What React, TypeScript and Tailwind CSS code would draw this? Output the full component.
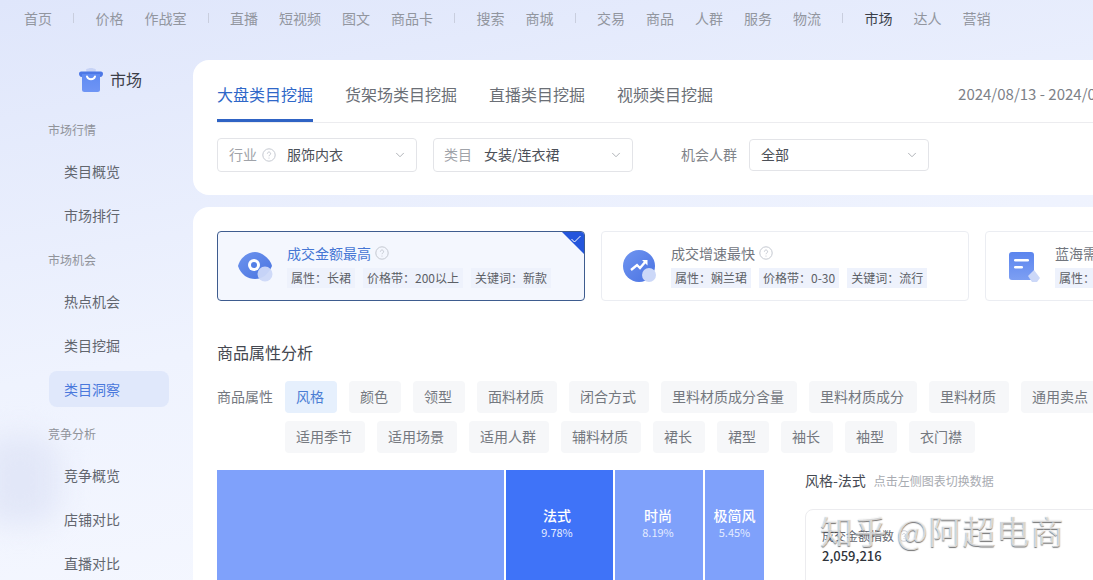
import { ChevronDown } from "lucide-react";

const navGroups = [
  ["首页"],
  ["价格", "作战室"],
  ["直播", "短视频", "图文", "商品卡"],
  ["搜索", "商城"],
  ["交易", "商品", "人群", "服务", "物流"],
  ["市场", "达人", "营销"],
];

function TopNav() {
  return (
    <div className="flex h-[60px] shrink-0 pl-6 pt-[3px] pb-[26px] items-start text-[14px] leading-[30px] text-[#92969f]">
      {navGroups.map((g, i) => (
        <div key={i} className="flex items-center">
          {i > 0 && <div className="mx-[21.25px] h-[10px] w-px bg-[#c9cede]" />}
          <div className="flex gap-[21px]">
            {g.map((t) => (
              <span key={t} className={`whitespace-nowrap ${t === "市场" ? "text-[#3a3f49]" : ""}`}>
                {t}
              </span>
            ))}
          </div>
        </div>
      ))}
    </div>
  );
}

function Help({ size = 14 }: { size?: number }) {
  return (
    <svg width={size} height={size} viewBox="0 0 14 14" fill="none" className="shrink-0">
      <circle cx="7" cy="7" r="6.2" stroke="#c4c8d0" strokeWidth="1" />
      <path d="M5.4 5.6a1.6 1.6 0 1 1 2.4 1.4c-.5.3-.8.6-.8 1.2" stroke="#c4c8d0" strokeWidth="1" />
      <circle cx="7" cy="10" r=".6" fill="#c4c8d0" />
    </svg>
  );
}

function ShopLogo() {
  return (
    <svg width="26" height="24" viewBox="0 0 26 24">
      <defs>
        <linearGradient id="shop" x1="0" y1="0" x2="0" y2="1">
          <stop offset="0" stopColor="#5f8af2" />
          <stop offset="1" stopColor="#6f95f5" />
        </linearGradient>
      </defs>
      <path d="M8 1.5c3-2 7-2 10 0l-1 5H9z" fill="#c7d3f6" />
      <path d="M1 5.5C1 4 2.5 3.5 4 3.5h18c1.500 0 3 .5 3 2s-.5 3.500-3 3.500H4C1.500 9 1 7 1 5.500z" fill="#4d78e6" />
      <path d="M4 6h18v15.500a2.500 2.500 0 0 1-2.500 2.500h-13A2.500 2.500 0 0 1 4 21.500z" fill="url(#shop)" />
      <path d="M9 8.500c1 3.500 7 3.500 8 0" stroke="#fff" strokeWidth="2" fill="none" strokeLinecap="round" />
    </svg>
  );
}

function SideItem({ label, active }: { label: string; active?: boolean }) {
  return (
    <div
      className={`h-9 w-[120px] rounded-lg flex items-center pl-[15px] text-[14px] ${
        active ? "bg-[#e0e8fb] text-[#4a78dc]" : "text-[#62666e]"
      }`}
    >
      {label}
    </div>
  );
}

function SideGroup({ title, items, active }: { title: string; items: string[]; active?: string }) {
  return (
    <div className="flex flex-col">
      <div className="h-5 leading-5 -ml-px text-[12px] text-[#90939a] mb-[13px]">{title}</div>
      <div className="flex flex-col gap-2">
        {items.map((t) => (
          <SideItem key={t} label={t} active={t === active} />
        ))}
      </div>
    </div>
  );
}

function Sidebar() {
  return (
    <div className="relative w-[193px] shrink-0 pl-[49px]">
      <div className="absolute -left-[20px] top-[375px] h-[90px] w-[80px] rounded-[30px] bg-[#e2e7f8] blur-[14px]" />
      <div className="relative flex h-10 items-center gap-[6px] pl-[29px] text-[16px] text-[#3c4049]">
        <ShopLogo />
        <span className="-mt-[3px]">市场</span>
      </div>
      <div className="relative mt-5 flex flex-col gap-[17px]">
        <SideGroup title="市场行情" items={["类目概览", "市场排行"]} />
        <SideGroup title="市场机会" items={["热点机会", "类目挖掘", "类目洞察"]} active="类目洞察" />
        <SideGroup title="竞争分析" items={["竞争概览", "店铺对比", "直播对比"]} />
      </div>
    </div>
  );
}

function Select({ label, value, help, w = "w-[200px]", h = "h-[34px]" }: { label?: string; value: string; help?: boolean; w?: string; h?: string }) {
  return (
    <div className={`${w} ${h} shrink-0 rounded border border-[#e3e4e8] bg-white flex items-center pl-[11px] pr-[9px] text-[14px]`}>
      {label && <span className={`text-[#a0a3a9] mr-[5px] -mt-[2px] ${help ? "" : "-ml-px"}`}>{label}</span>}
      {help && <Help />}
      <span className={`text-[#4c5058] -mt-[2px] ${label ? (help ? "ml-[11px]" : "ml-[7px]") : ""}`}>{value}</span>
      <ChevronDown size={14} className="ml-auto text-[#a5a8ae]" strokeWidth={1.5} />
    </div>
  );
}

function Header() {
  const tabs = ["大盘类目挖掘", "货架场类目挖掘", "直播类目挖掘", "视频类目挖掘"];
  return (
    <div className="h-[135px] rounded-l-2xl bg-white pl-6 overflow-hidden">
      <div className="flex items-start h-[63px] border-b border-[#ececef] pt-5">
        <div className="flex gap-8 shrink-0">
          {tabs.map((t, i) => (
            <div
              key={t}
              className={`h-[42px] leading-[28px] text-[16px] whitespace-nowrap border-b-[3px] ${
                i === 0 ? "border-[#2f63c4] text-[#2f67c8]" : "border-transparent text-[#6b6f76]"
              }`}
            >
              {t}
            </div>
          ))}
        </div>
        <div className="ml-[245px] shrink-0 leading-[28px] whitespace-nowrap text-[15px] text-[#7d8188]">
          2024/08/13 - 2024/08/19
        </div>
      </div>
      <div className="flex items-center gap-4 mt-[15px]">
        <Select label="行业" value="服饰内衣" help />
        <Select label="类目" value="女装/连衣裙" />
        <div className="flex items-center gap-3 ml-8">
          <span className="text-[14px] -mt-[2px] text-[#7f8389]">机会人群</span>
          <Select value="全部" w="w-[180px]" h="h-8" />
        </div>
      </div>
    </div>
  );
}

function EyeIcon() {
  return (
    <svg width="36" height="32" viewBox="0 0 36 32">
      <defs>
        <linearGradient id="eye" x1="0" y1="0" x2="1" y2="1">
          <stop offset="0" stopColor="#6d94ee" />
          <stop offset="1" stopColor="#4a74e0" />
        </linearGradient>
      </defs>
      <path d="M0 16C3 6 11 2 17 2s15 6 17 14c-4 9-10 13-17 13S3 25 0 16z" fill="url(#eye)" />
      <circle cx="16" cy="15" r="6" fill="#fff" />
      <circle cx="16" cy="15" r="3" fill="#5480e6" />
      <circle cx="27" cy="24" r="7.500" fill="#ccd8f8" opacity=".95" />
    </svg>
  );
}

function TrendIcon() {
  return (
    <svg width="36" height="34" viewBox="0 0 36 34">
      <defs>
        <linearGradient id="trend" x1="0" y1="0" x2="1" y2="1">
          <stop offset="0" stopColor="#6f95f0" />
          <stop offset="1" stopColor="#4a72e2" />
        </linearGradient>
      </defs>
      <circle cx="17" cy="16" r="16" fill="url(#trend)" />
      <path d="M9 20l6-5 3 3 6-7" stroke="#fff" strokeWidth="2.400" fill="none" />
      <path d="M20 10h5.500v5.500z" fill="#fff" />
      <circle cx="27" cy="25" r="7" fill="#ccd8f8" />
    </svg>
  );
}

function DocIcon() {
  return (
    <svg width="36" height="34" viewBox="0 0 36 34">
      <defs>
        <linearGradient id="doc" x1="0" y1="0" x2="0" y2="1">
          <stop offset="0" stopColor="#5b85ee" />
          <stop offset="1" stopColor="#7d9ff3" />
        </linearGradient>
      </defs>
      <rect x="3" y="2" width="25" height="28" rx="3" fill="url(#doc)" />
      <rect x="8" y="9" width="15" height="2.600" rx="1.300" fill="#fff" />
      <rect x="8" y="16" width="9" height="2.600" rx="1.300" fill="#fff" />
      <path d="M22 26l6-6 6 8-3 4h-5z" fill="#ccd8f8" />
    </svg>
  );
}

function Card({ title, tags, icon, active }: { title: string; tags: string[]; icon: React.ReactNode; active?: boolean }) {
  return (
    <div
      className={`relative h-[70px] w-[368px] shrink-0 rounded border pl-5 pt-[11px] flex overflow-hidden ${
        active ? "border-[#3e5c8f] bg-[#f4f7fe]" : "border-[#ebedf2] bg-white"
      }`}
    >
      <div className="w-[49px] shrink-0 pt-[7px]">{icon}</div>
      <div className="flex flex-col">
        <div className="flex h-5 items-center gap-1 whitespace-nowrap">
          <span className={`text-[14px] ${active ? "text-[#4676d4]" : "text-[#72767e]"}`}>{title}</span>
          <Help />
        </div>
        <div className="mt-[5px] flex gap-2">
          {tags.map((t) => (
            <span key={t} className="h-5 leading-5 px-1 whitespace-nowrap text-[12px] text-[#5c6066] bg-[#eef2fc]">
              {t}
            </span>
          ))}
        </div>
      </div>
      {active && (
        <div className="absolute right-0 top-0">
          <svg width="22" height="22" viewBox="0 0 22 22">
            <path d="M0 0h22v22z" fill="#2456dc" />
            <path d="M9.500 7l3 3 6-6" stroke="#fff" strokeWidth="1" fill="none" />
          </svg>
        </div>
      )}
    </div>
  );
}

function Chip({ label, active }: { label: string; active?: boolean }) {
  return (
    <span
      className={`h-8 leading-[30px] shrink-0 rounded pl-[11px] pr-[13px] text-[14px] whitespace-nowrap ${
        active ? "bg-[#e6f0fd] text-[#4a7dd4]" : "bg-[#f6f7f9] text-[#74787f]"
      }`}
    >
      {label}
    </span>
  );
}

function Block({ w, dark, name, pct, shift }: { w: string; dark?: boolean; name?: string; pct?: string; shift?: string }) {
  return (
    <div className={`${w} ${shift ?? ""} shrink-0 h-[130px] pt-[35px] flex flex-col items-center text-white ${dark ? "bg-[#3f73f8]" : "bg-[#7fa1fb]"}`}>
      {name && <div className="text-[14px] font-medium leading-[20px] whitespace-nowrap">{name}</div>}
      {pct && <div className="text-[11px] leading-[15px] text-[#e3ebff]">{pct}</div>}
    </div>
  );
}

function Content() {
  const row1 = ["风格", "颜色", "领型", "面料材质", "闭合方式", "里料材质成分含量", "里料材质成分", "里料材质", "通用卖点"];
  const row2 = ["适用季节", "适用场景", "适用人群", "辅料材质", "裙长", "裙型", "袖长", "袖型", "衣门襟"];
  return (
    <div className="flex-1 rounded-tl-2xl bg-white pl-6 pt-6 overflow-hidden">
      <div className="flex gap-4">
        <Card active icon={<EyeIcon />} title="成交金额最高" tags={["属性：长裙", "价格带：200以上", "关键词：新款"]} />
        <Card icon={<TrendIcon />} title="成交增速最快" tags={["属性：娴兰珺", "价格带：0-30", "关键词：流行"]} />
        <Card icon={<DocIcon />} title="蓝海需求类目" tags={["属性：通勤", "价格带：30-50"]} />
      </div>
      <div className="mt-10 h-6 leading-[22px] text-[16px] text-[#444851]">商品属性分析</div>
      <div className="mt-4 flex gap-3">
        <div className="h-8 leading-[30px] w-14 shrink-0 text-[14px] whitespace-nowrap text-[#74787f]">商品属性</div>
        <div className="flex flex-col gap-2">
          <div className="flex gap-3">
            {row1.map((c, i) => (
              <Chip key={c} label={c} active={i === 0} />
            ))}
          </div>
          <div className="flex gap-3">
            {row2.map((c) => (
              <Chip key={c} label={c} />
            ))}
          </div>
        </div>
      </div>
      <div className="mt-[17px] flex">
        <div className="flex gap-[2px] w-[547px] shrink-0">
          <Block w="w-[287px]" />
          <Block w="w-[107px]" dark name="法式" pct="9.78%" shift="pr-[5px]" />
          <Block w="w-[88px]" name="时尚" pct="8.19%" shift="pr-[2px]" />
          <Block w="w-[59px]" name="极简风" pct="5.45%" />
        </div>
        <div className="ml-[41px] w-[400px] shrink-0">
          <div className="flex items-center gap-2 h-[22px] whitespace-nowrap">
            <span className="text-[14px] -mt-[2px] text-[#444851]">风格-法式</span>
            <span className="text-[12px] -mt-[1px] text-[#a8abb1]">点击左侧图表切换数据</span>
          </div>
          <div className="mt-[17px] h-[100px] rounded-lg border border-[#ececef] pl-4 pt-[16px]">
            <div className="flex items-center gap-1 h-5 text-[12px] text-[#62666e]">
              成交金额指数 <Help size={12} />
            </div>
            <div className="text-[13px] leading-5 font-medium text-[#30343b]">2,059,216</div>
          </div>
        </div>
      </div>
    </div>
  );
}

export default function App() {
  return (
    <div className="relative flex h-[580px] w-[1093px] flex-col overflow-hidden bg-[linear-gradient(170deg,#dfe6fb,#eff3fe_50%,#f7f9ff)] font-['Noto_Sans_CJK_SC','Microsoft_YaHei',sans-serif]">
      <TopNav />
      <div className="flex flex-1 min-h-0">
        <Sidebar />
        <div className="flex flex-1 min-w-0 flex-col gap-3">
          <Header />
          <Content />
        </div>
      </div>
      <div className="absolute left-[820px] top-[508px] whitespace-nowrap text-[33px] leading-[44px] tracking-[1px] text-white/70 [text-shadow:0_1px_1px_rgba(60,60,60,0.7)]">
        知乎 @阿超电商
      </div>
    </div>
  );
}
